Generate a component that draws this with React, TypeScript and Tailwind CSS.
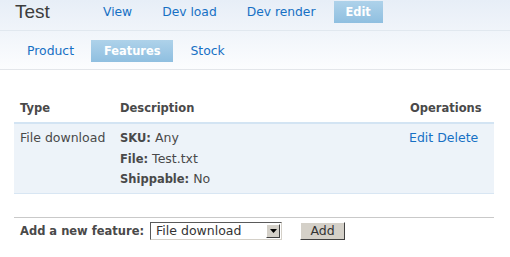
import React from "react";

export default function App() {
  const link = "text-[#1670c4]";
  const lbl = "font-bold text-[11.5px] leading-none";
  return (
    <div className="w-[510px] h-[257px] bg-white font-['DejaVu_Sans',sans-serif] text-[#494949] overflow-hidden">
      <div className="bg-gradient-to-b from-[#e7eef7] to-[#fcfdfe]">
        <div className="h-[31px] flex items-start pt-[1px] border-b border-[#e1e8ef]">
          <h1 className="ml-[15px] w-[76px] h-[22px] leading-[22px] text-[19px] text-[#3d3d3d] font-['Liberation_Sans',Arial,sans-serif] font-normal">
            Test
          </h1>
          <nav className="flex gap-[6px] text-[12.3px] leading-[22px]">
            <a className={`h-[22px] px-[12px] ${link}`}>View</a>
            <a className={`h-[22px] px-[12px] ${link}`}>Dev load</a>
            <a className={`h-[22px] px-[12px] ${link}`}>Dev render</a>
            <a className="h-[22px] px-[12px] text-white font-bold text-[11.4px] bg-gradient-to-b from-[#aed2ea] to-[#8fbfe0]">Edit</a>
          </nav>
        </div>
        <div className="h-[39px] flex items-start pt-[9px] pl-[14px] gap-[4px] border-b border-[#e3e6ea] text-[12.4px] leading-[22px]">
          <a className={`h-[22px] px-[13px] ${link}`}>Product</a>
          <a className="h-[22px] px-[13px] text-white font-bold text-[11.4px] bg-gradient-to-b from-[#aed2ea] to-[#8fbfe0]">Features</a>
          <a className={`h-[22px] px-[13px] ${link}`}>Stock</a>
        </div>
      </div>

      <div className="mx-[14px] w-[480px]">
        <div className="mt-[30px] grid grid-cols-[100px_290px_90px] text-[11.5px] font-bold leading-[17px] border-b-2 border-[#d3e4f3]">
          <div className="pl-[6px] pb-[5px]">Type</div>
          <div className="pl-[6px] pb-[5px]">Description</div>
          <div className="pl-[6px] pb-[5px]">Operations</div>
        </div>
        <div className="grid grid-cols-[100px_290px_90px] bg-[#edf3f9] border-b border-[#d8e6f3] text-[12.5px] leading-[20px] pt-[4px] pb-[4px]">
          <div className="pl-[6px]">File download</div>
          <div className="pl-[6px] flex flex-col">
            <div className="h-[20px]">
              <span className={lbl}>SKU:</span> Any
            </div>
            <div className="h-[21px] pt-[1px]">
              <span className={lbl}>File:</span> Test.txt
            </div>
            <div className="h-[20px]">
              <span className={lbl}>Shippable:</span> No
            </div>
          </div>
          <div className="pl-[5px]">
            <a className={link}>Edit</a> <a className={link}>Delete</a>
          </div>
        </div>

        <div className="mt-[23px] border-t border-[#c9c9c9] pt-[4px] flex items-center h-[23px]">
          <span className="pl-[6px] text-[11.5px] font-bold leading-[18px]">Add a new feature:</span>
          <div className="ml-[6px] w-[132px] h-[18px] bg-white border border-t-[#5a5a5a] border-l-[#5a5a5a] border-r-[#d4d0c8] border-b-[#d4d0c8] flex items-center justify-between pl-[5px] pr-[1px]">
            <span className="text-[12.5px] leading-[16px] text-[#333]">File download</span>
            <span className="w-[14px] h-[14px] bg-[#d4d0c8] border border-t-white border-l-white border-r-[#404040] border-b-[#404040] flex items-center justify-center">
              <svg width="7" height="4" viewBox="0 0 7 4">
                <path d="M0 0h7L3.5 4z" fill="#000" />
              </svg>
            </span>
          </div>
          <button className="ml-[18px] w-[45px] h-[18px] bg-[#d4d0c8] border border-t-white border-l-white border-r-[#404040] border-b-[#404040] text-[12.5px] leading-[16px] text-[#333] font-['DejaVu_Sans',sans-serif]">
            Add
          </button>
        </div>
      </div>
    </div>
  );
}
